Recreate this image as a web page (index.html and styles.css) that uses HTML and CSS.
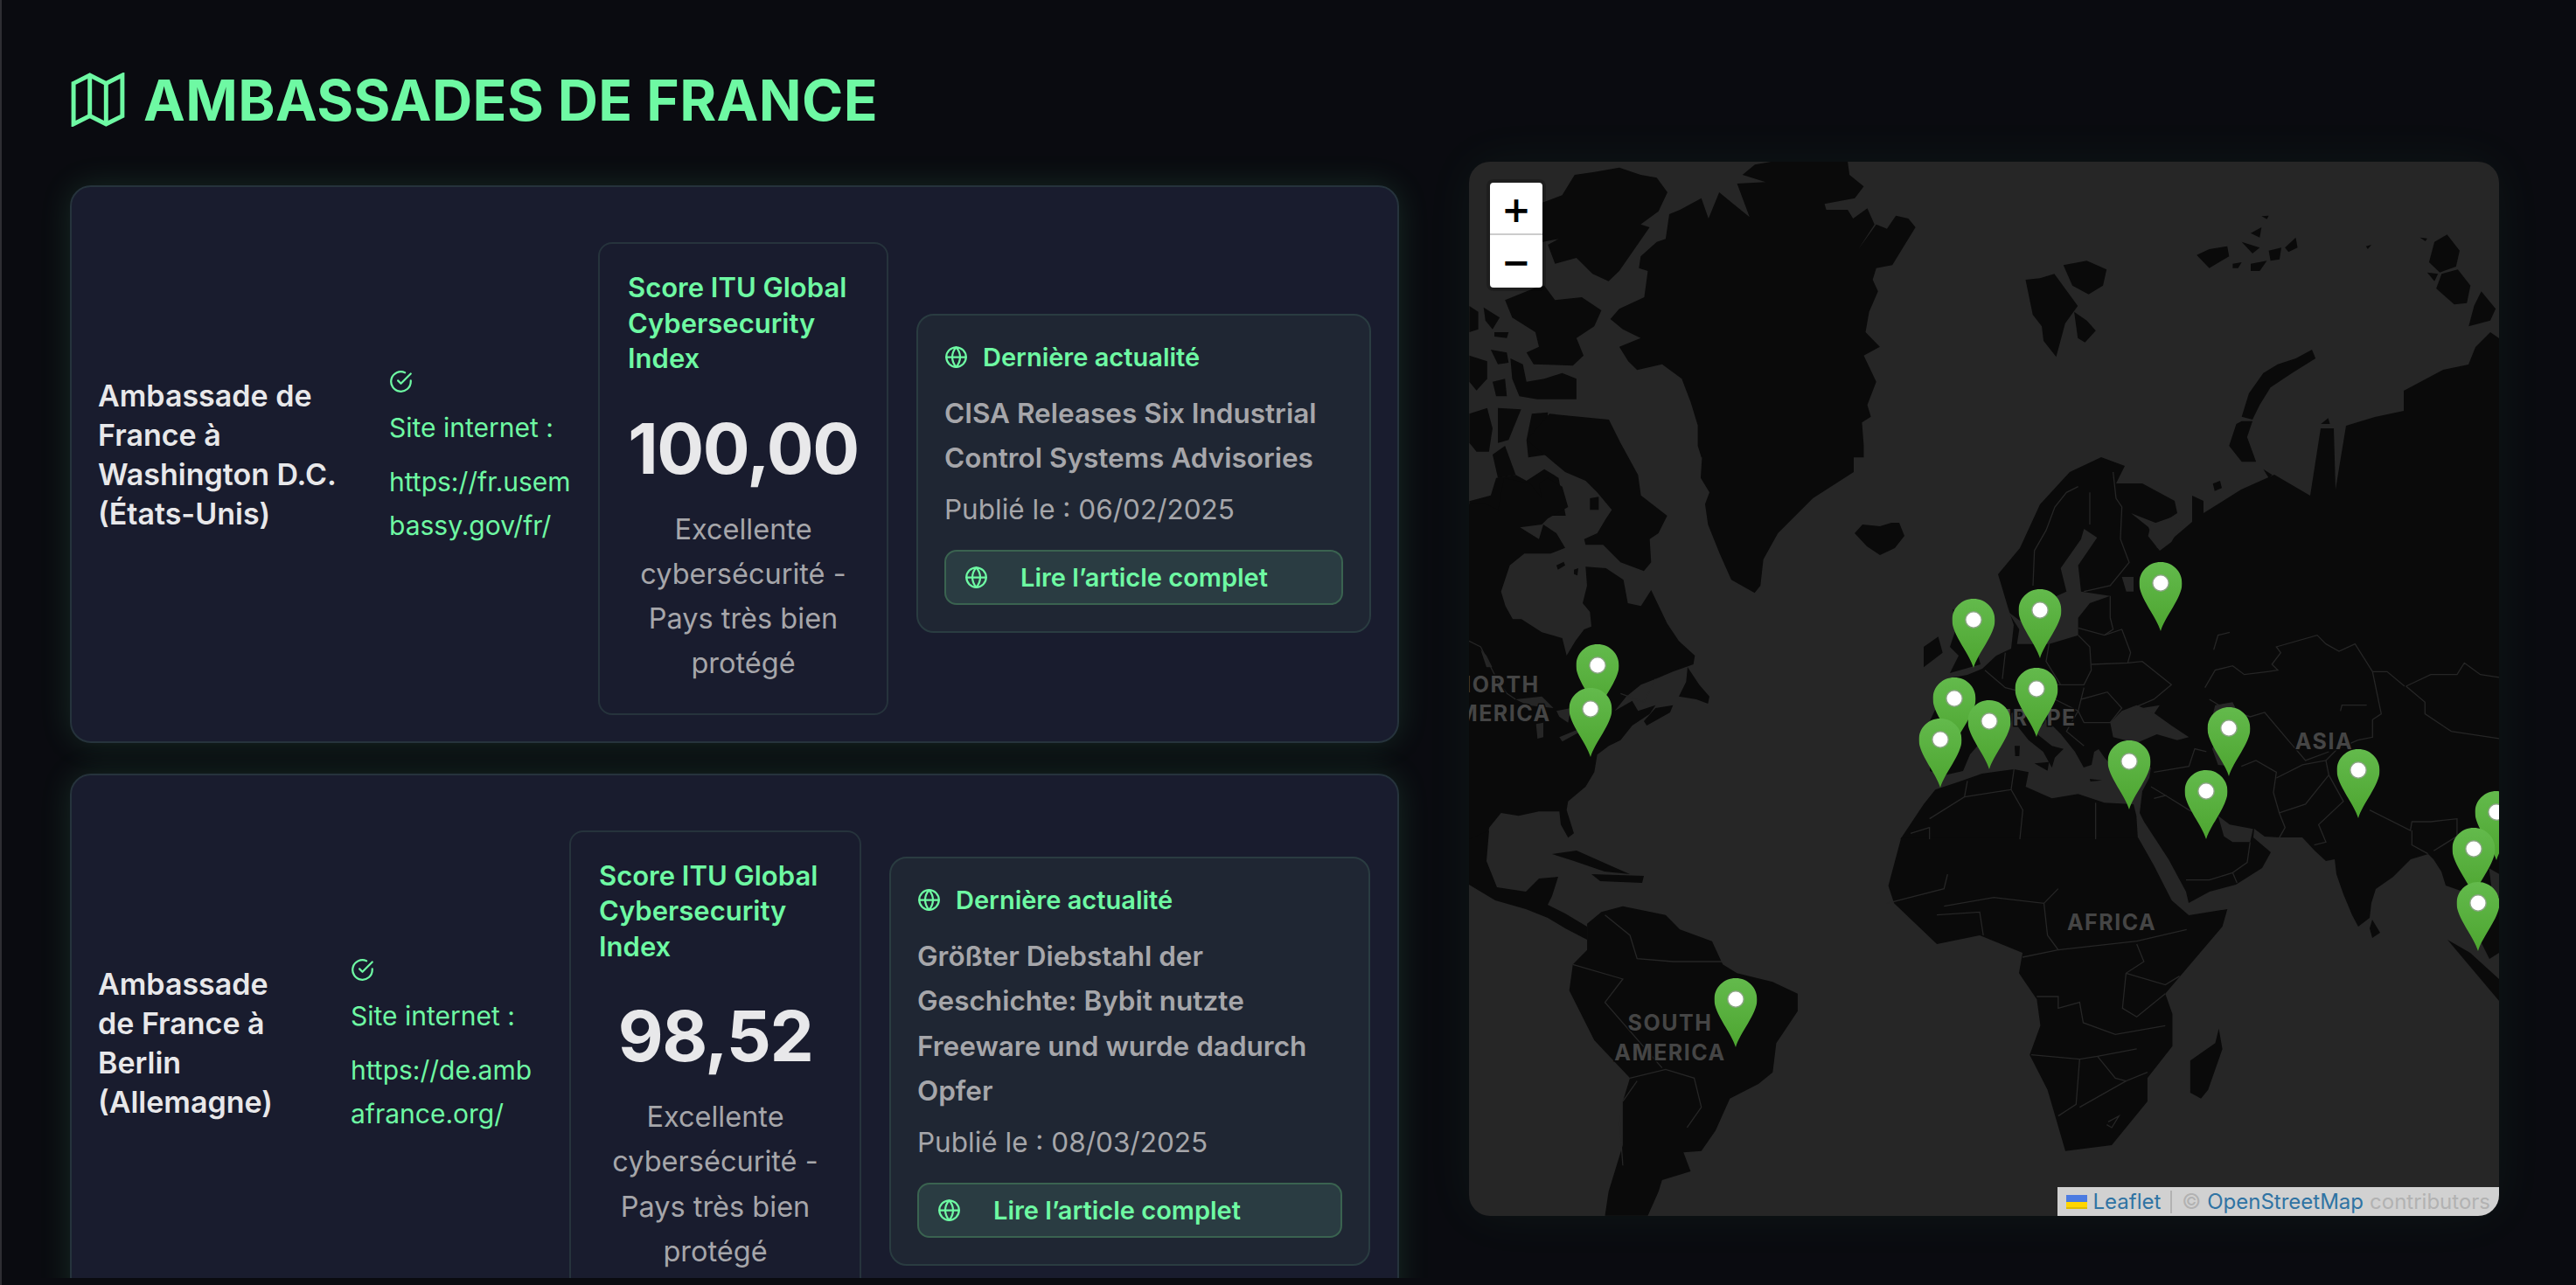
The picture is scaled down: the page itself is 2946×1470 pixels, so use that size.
FILE: index.html
```html
<!DOCTYPE html>
<html lang="fr">
<head>
  <meta charset="UTF-8">
  <title>Ambassades de France</title>
  <link rel="stylesheet" href="styles.css">
</head>
<body>
  <svg class="defs" width="0" height="0">
    <symbol id="globe" viewBox="0 0 24 24"><circle cx="12" cy="12" r="10"/><path d="M2 12h20"/><path d="M12 2a15.3 15.3 0 0 1 4 10 15.3 15.3 0 0 1-4 10 15.3 15.3 0 0 1-4-10 15.3 15.3 0 0 1 4-10z"/></symbol>
    <symbol id="check" viewBox="0 0 24 24"><path d="M22 11.08V12a10 10 0 1 1-5.93-9.14"/><path d="M22 4 12 14.01l-3-3"/></symbol>
  </svg>

  <div class="panel">
    <h1 class="title">
      <svg class="title-icon" viewBox="2 2 20 20"><polygon points="3 6 9 3 15 6 21 3 21 18 15 21 9 18 3 21"/><path d="M9 3v15"/><path d="M15 6v15"/></svg>
      AMBASSADES DE FRANCE
    </h1>

    <article class="card card-dc">
      <h2 class="name">Ambassade de<br>France à<br>Washington D.C.<br>(États-Unis)</h2>
      <div class="site">
        <svg class="ico check"><use href="#check"/></svg>
        <p class="site-label">Site internet :</p>
        <a class="site-link">https://fr.usem<br>bassy.gov/fr/</a>
      </div>
      <div class="score">
        <h3 class="score-title">Score ITU Global<br>Cybersecurity<br>Index</h3>
        <div class="score-value">100,00</div>
        <p class="score-desc">Excellente<br>cybersécurité -<br>Pays très bien<br>protégé</p>
      </div>
      <div class="news">
        <div class="news-head"><svg class="ico"><use href="#globe"/></svg>Dernière actualité</div>
        <p class="news-title">CISA Releases Six Industrial<br>Control Systems Advisories</p>
        <p class="news-date">Publié le : 06/02/2025</p>
        <a class="news-btn"><svg class="ico"><use href="#globe"/></svg>Lire l’article complet</a>
      </div>
    </article>

    <article class="card card-berlin">
      <h2 class="name">Ambassade<br>de France à<br>Berlin<br>(Allemagne)</h2>
      <div class="site">
        <svg class="ico check"><use href="#check"/></svg>
        <p class="site-label">Site internet :</p>
        <a class="site-link">https://de.amb<br>afrance.org/</a>
      </div>
      <div class="score">
        <h3 class="score-title">Score ITU Global<br>Cybersecurity<br>Index</h3>
        <div class="score-value">98,52</div>
        <p class="score-desc">Excellente<br>cybersécurité -<br>Pays très bien<br>protégé</p>
      </div>
      <div class="news">
        <div class="news-head"><svg class="ico"><use href="#globe"/></svg>Dernière actualité</div>
        <p class="news-title">Größter Diebstahl der<br>Geschichte: Bybit nutzte<br>Freeware und wurde dadurch<br>Opfer</p>
        <p class="news-date">Publié le : 08/03/2025</p>
        <a class="news-btn"><svg class="ico"><use href="#globe"/></svg>Lire l’article complet</a>
      </div>
    </article>
  </div>

  <div class="side">
    <div class="map">
      <svg class="map-svg" viewBox="1680 185 1178 1206" width="1178" height="1206">
        <defs>
          <linearGradient id="pinfill" x1="0" y1="0" x2="0" y2="1">
            <stop offset="0" stop-color="#63ba4c"/>
            <stop offset="1" stop-color="#4da530"/>
          </linearGradient>
          <symbol id="pin" width="49" height="79" viewBox="0 0 49 79">
            <path d="M24.5 79C20 63 0 41 0 24.5 0 10.500 11 0 24.500 0S49 10.500 49 24.500C49 41 29 63 24.500 79z" fill="url(#pinfill)"/>
            <circle cx="24.500" cy="24" r="10" fill="#8aa583"/>
            <circle cx="24.500" cy="24" r="8.500" fill="#fff"/>
          </symbol>
        </defs>
        <rect x="1680" y="185" width="1178" height="1206" class="sea"/>

        <!-- arctic canada + greenland -->
        <g class="land" transform="translate(1660 170) scale(.4082 .3333)">
          <polygon points="815,90 850,55 900,44 1110,44 1115,90 1155,130 1130,170 1045,190 1050,210 1110,210 1125,240 1165,205 1185,260 1140,345 1190,260 1220,275 1245,230 1280,240 1300,270 1265,340 1235,400 1190,410 1180,450 1195,490 1170,560 1160,630 1200,680 1155,710 1190,800 1165,880 1175,920 1150,940 1155,1020 1155,1060 700,1060 690,1020 690,950 670,870 645,790 590,740 520,760 495,730 470,680 530,650 480,620 445,585 470,550 540,510 550,420 525,410 530,370 575,320 600,310 610,225 640,210 670,280 640,210 700,170 720,240 750,150 800,200 835,235 800,120 880,115"/>
          <polygon points="255,185 310,160 345,90 400,80 470,65 530,90 575,100 605,150 580,215 530,260 555,270 470,420 440,455 395,430 350,375 290,395 270,330 300,310 255,320"/>
          <polygon points="150,520 230,480 260,470 290,520 365,510 420,555 400,610 350,650 370,710 340,745 230,740 210,700 245,680 235,630 170,580"/>
          <polygon points="50,540 75,560 75,620 50,630"/>
          <polygon points="90,545 135,580 115,620 95,590"/>
          <polygon points="120,630 160,630 155,650 120,645"/>
          <polygon points="110,690 155,700 160,735 130,740"/>
          <polygon points="165,720 200,740 210,800 260,790 310,770 350,790 350,860 240,860 190,850 170,790"/>
          <polygon points="50,710 100,730 100,790 70,830 50,800"/>
          <polygon points="115,800 150,790 155,850 125,850"/>
          <polygon points="50,910 100,890 115,960 105,1040 70,1040 50,1010"/>
          <polygon points="130,890 195,895 160,1000 130,1010"/>
          <polygon points="210,1000 225,910 270,905 265,1000 270,1050 215,1060"/>
          <polygon points="115,1050 150,1020 180,1120 130,1130"/>
          <polygon points="50,1210 110,1190 125,1130 180,1120 210,1140 260,1100 300,1130 320,1260 50,1260"/>
        </g>

        <!-- russian arctic islands -->
        <g class="land" transform="translate(2300 170) scale(.412 .3333)">
          <polygon points="40,450 80,445 120,430 185,540 150,600 125,715 90,660 85,610 60,570"/>
          <polygon points="145,400 210,385 265,415 255,470 215,500 170,470"/>
          <polygon points="175,560 210,590 235,625 205,665 185,650"/>
          <polygon points="515,365 550,345 600,335 605,370 550,410"/>
          <polygon points="640,320 690,340 670,360"/>
          <polygon points="715,350 750,340 745,380 720,385"/>
          <polygon points="760,340 790,305 795,340 770,355"/>
          <polygon points="665,290 695,270 690,305"/>
          <polygon points="695,232 715,230 710,242"/>
          <polygon points="615,395 640,390 630,410 615,410"/>
          <polygon points="665,395 710,385 690,420 665,420"/>
          <polygon points="835,690 845,720 780,770 720,820 690,880 670,930 640,920 660,840 700,770 740,740 790,720"/>
          <polygon points="640,935 670,935 655,990 680,1075 640,1075 605,1020 625,945"/>
          <polygon points="1210,295 1245,350 1235,405 1190,425 1160,390 1175,320"/>
          <polygon points="1155,425 1185,430 1175,455"/>
          <polygon points="1195,430 1240,415 1275,470 1265,530 1230,535 1180,480"/>
          <polygon points="1305,490 1345,550 1330,590 1270,610 1285,540"/>
          <polygon points="860,945 880,925 885,945"/>
          <polygon points="560,1150 580,1140 585,1165 565,1175"/>
          <polygon points="700,1100 725,1120 715,1130"/>
          <polygon points="985,335 1000,330 990,345"/>
          <polygon points="1135,305 1155,308 1150,318"/>
        </g>

        <g class="land" transform="translate(1680 520) scale(.3333)">
          <polygon points="198,-50 276,-140 480,-120 520,-40 580,70 590,140 680,210 650,270 620,290 625,370 600,400 520,370 460,310 400,310 395,290 440,270 470,220 490,190 440,130 400,90 330,60 270,10"/>
          <polygon points="415,150 445,145 445,190 415,190"/>
          <polygon points="0,170 60,170 100,190 120,80 210,100 250,150 240,100 270,80 320,110 340,180 270,220 250,240 175,250 240,290 255,240 300,270 330,320 280,340 250,340 190,340 140,380 110,470 125,520 150,565 180,565 250,610 320,630 335,690 365,640 395,600 420,590 415,540 390,510 405,450 400,385 470,390 530,430 545,510 590,520 625,465 680,580 720,640 775,690 770,720 700,745 640,770 590,790 540,830 500,880 560,845 580,880 640,860 620,890 560,930 520,980 480,1000 440,1030 430,1090 400,1140 340,1190 335,1220 360,1300 340,1315 315,1270 310,1225 240,1225 170,1240 110,1230 70,1280 60,1320 0,1320"/>
          <polygon points="750,730 790,790 825,830 820,855 780,840 720,830 745,780"/>
          <polygon points="640,870 700,860 690,885 610,930 600,915"/>
          <polygon points="300,380 325,368 330,380 305,395"/>
          <polygon points="360,395 375,390 372,415 360,410"/>
          <!-- greenland tail -->
          <polygon points="800,0 1320,0 1320,60 1180,150 1060,270 1010,360 1000,450 980,475 900,430 860,340 820,240 810,170 825,130 795,80"/>
          <!-- lakes -->
          <polygon class="sea" points="160,840 250,830 290,870 200,860"/>
          <polygon class="sea" points="230,925 255,920 255,970 235,975"/>
          <polygon class="sea" points="300,880 350,870 340,920 310,900"/>
          <polygon class="sea" points="310,970 370,945 375,955 320,985"/>
          <polygon class="sea" points="40,670 60,690 80,730 60,730"/>
        </g>

        <g class="land">
          <!-- mexico, central america, caribbean -->
          <polygon points="1680,960 1703,950 1700,985 1712,1015 1745,1020 1760,1005 1782,1003 1775,1025 1770,1035 1790,1045 1815,1060 1815,1075 1790,1062 1770,1050 1745,1040 1710,1030 1680,1012"/>
          <polygon points="1775,977 1803,973 1848,993 1864,1000 1835,997 1800,985"/>
          <polygon points="1820,1000 1880,1002 1878,1010 1830,1008"/>
          <!-- iceland -->
          <polygon points="2121,610 2130,600 2150,602 2163,598 2172,598 2178,613 2167,627 2150,635 2135,625"/>
          <!-- eurasia -->
          <polygon points="2200,840 2213,812 2250,812 2238,790 2228,776 2250,772 2267,765 2283,750 2300,742 2303,715 2297,697 2285,657 2310,627 2333,577 2367,540 2403,523 2430,533 2420,553 2450,553 2487,573 2490,587 2470,600 2437,587 2457,603 2467,627 2480,620 2507,597 2507,567 2520,573 2520,587 2563,560 2601,543 2642,567 2654,490 2669,490 2671,560 2683,487 2716,477 2749,470 2749,447 2794,423 2823,417 2831,397 2848,380 2858,387 2858,1090 2847,1097 2830,1063 2820,1040 2817,1020 2797,1013 2792,997 2783,983 2777,977 2757,983 2737,1003 2717,1017 2712,1033 2710,1050 2697,1060 2690,1047 2680,1023 2672,1000 2670,983 2660,985 2647,973 2633,958 2607,958 2590,957 2578,948 2577,958 2597,975 2587,993 2557,1012 2527,1020 2503,1033 2500,1020 2480,983 2467,963 2452,940 2447,930 2450,905 2458,890 2460,878 2417,878 2407,867 2400,857 2395,860 2392,875 2383,878 2373,860 2357,840 2337,820 2323,807 2313,807 2307,813 2283,823 2267,847 2253,863 2245,882 2223,887 2207,882 2208,853"/>
          <!-- sumatra, sri lanka -->
          <polygon points="2799,1075 2825,1090 2858,1120 2858,1145 2820,1100"/>
          <polygon points="2713,1052 2722,1067 2713,1073 2710,1062"/>
        </g>

        <g class="land" transform="translate(2150 520) scale(.3333)">
          <!-- uk, ireland, italy, islands -->
          <polygon points="250,530 300,560 345,720 240,750 270,690 240,660 260,600"/>
          <polygon points="150,660 200,625 215,680 150,730"/>
          <polygon points="490,860 540,960 590,1000 630,1010 600,1040 590,1075 560,1020 510,980 470,930"/>
          <polygon points="462,1000 480,1000 478,1035 464,1035"/>
          <polygon points="530,1060 580,1055 575,1085"/>
          <polygon points="720,1113 762,1118 722,1122"/>
          <!-- north africa -->
          <polygon points="70,1320 110,1260 150,1200 190,1150 280,1120 350,1095 460,1080 510,1090 500,1140 590,1180 680,1165 770,1195 870,1200 880,1240 885,1320"/>
          <!-- baltic, white sea, black sea -->
          <polygon class="sea" points="700,255 745,285 680,380 690,470 790,485 720,510 680,560 680,620 580,650 470,650 478,600 440,540 480,570 530,520 640,470 620,390 690,290"/>
          <polygon class="sea" points="930,240 1000,215 1040,230 1000,300 960,330 920,280"/>
          <polygon class="sea" points="790,920 830,880 880,860 930,880 1000,930 1060,970 1020,980 950,960 880,990 800,970"/>
          <polygon class="sea" points="900,870 960,860 940,890"/>
          <polygon class="sea" points="830,420 870,420 870,470 845,470"/>
        </g>

        <g transform="translate(2430 700) scale(.3333)">
          <polygon class="sea" points="310,320 370,310 390,350 370,530 320,525 300,470 330,400 300,360"/>
          <polygon class="sea" points="320,700 360,730 440,745 430,790 370,790 340,770"/>
          <polygon class="sea" points="1250,880 1285,900 1285,980 1260,960"/>
        </g>

        <g class="land" transform="translate(1660 1000) scale(.8163 .3333)">
          <!-- south america -->
          <polygon points="190,170 210,130 240,110 300,140 320,190 365,230 380,310 400,340 450,370 485,410 485,470 455,580 450,680 430,720 390,770 370,880 350,950 325,955 335,1020 295,1050 290,1090 275,1172 215,1172 220,1090 240,930 240,780 250,700 200,570 165,400 170,310 190,260"/>
          <!-- africa below the mediterranean -->
          <polygon points="630,-125 962,-125 984,-30 1009,90 1033,141 1087,120 1080,180 1000,410 1010,480 1010,590 975,700 975,780 925,930 860,950 835,740 810,620 825,520 820,430 795,340 800,270 770,240 740,210 680,240 620,100 612,40"/>
          <polygon points="1075,530 1080,600 1060,740 1050,770 1035,750 1035,640 1070,580"/>
        </g>

        <g class="border" transform="translate(2150 520) scale(.3333)">
          <polyline points="680,110 640,130 600,180 570,260 530,330 525,450"/>
          <polyline points="720,130 720,240"/>
          <polyline points="800,60 810,150 830,180 825,290 855,370 790,450 700,470"/>
          <polyline points="680,595 770,620 800,600 790,560 790,485"/>
          <polyline points="680,620 720,660 725,740 700,790 620,790 570,710 580,650"/>
          <polyline points="770,620 830,600 860,680 850,715 725,720"/>
          <polyline points="850,715 900,710 1000,790 940,840 870,870"/>
          <polyline points="700,800 690,840 780,815 830,870 790,920 700,920 680,880 690,840"/>
          <polyline points="360,740 430,800 470,810 570,790 620,790"/>
          <polyline points="430,680 420,770"/>
          <polyline points="170,1250 290,1175 300,1120"/>
          <polyline points="290,1175 450,1150 460,1080"/>
          <polyline points="450,1150 490,1220 480,1320"/>
          <polyline points="740,1195 740,1320"/>
          <polyline points="105,1300 170,1280 170,1320"/>
          <polyline points="600,840 680,880 640,950 700,1000"/>
        </g>
        <g class="border" transform="translate(2430 700) scale(.3333)">
          <polyline points="275,260 310,200 370,185 410,215 490,205 525,200 505,180 535,140 520,120 660,80 690,110 735,135 790,110 850,205 900,205 960,255"/>
          <polyline points="290,300 340,330 430,360 480,345 560,440 620,510 700,480"/>
          <polyline points="965,255 1050,215 1140,215 1165,175 1220,215 1285,225"/>
          <polyline points="965,255 1030,310 1030,350 1120,410 1285,435"/>
          <polyline points="850,205 880,350 850,370 850,430 800,440 730,470 690,510"/>
          <polyline points="400,530 450,510 520,550 510,620 530,690 550,740 530,775"/>
          <polyline points="520,570 610,525 690,510 700,560 620,660 530,690"/>
          <polyline points="700,560 750,650 665,730 690,790 650,800"/>
          <polyline points="840,680 980,750 985,720 1050,720 1140,710 1140,770 1060,820"/>
          <polyline points="985,750 985,800 1040,830"/>
          <polyline points="140,630 220,680 310,720"/>
          <polyline points="210,920 290,920 370,895 420,860 430,790"/>
          <polyline points="370,895 385,930"/>
          <polyline points="100,550 220,530 240,470 280,480"/>
          <polyline points="100,640 140,630 90,600"/>
          <polyline points="305,130 320,80 360,70"/>
          <polyline points="740,340 745,320 830,320"/>
        </g>
        <g class="border" transform="translate(1660 1000) scale(.8163 .3333)">
          <polyline points="610,100 690,50 695,0"/>
          <polyline points="690,110 760,80 830,100 850,50"/>
          <polyline points="680,140 740,130 745,210"/>
          <polyline points="830,100 835,210 850,260 800,285"/>
          <polyline points="850,260 960,230 1030,190"/>
          <polyline points="820,420 850,420 850,460 880,440 885,510 930,550 1000,520"/>
          <polyline points="812,620 880,635 905,625 960,600"/>
          <polyline points="880,635 875,790 850,830"/>
          <polyline points="905,625 930,700 945,710 975,680"/>
          <polyline points="945,710 880,800"/>
          <polyline points="960,240 970,300 945,340 940,460 960,490 1000,410"/>
          <polyline points="945,340 1000,380 1020,350"/>
          <polyline points="215,140 250,210 260,290 310,300 380,300"/>
          <polyline points="170,310 240,360 215,440 295,665"/>
          <polyline points="250,700 300,670 340,700 350,800 330,870"/>
          <polyline points="240,780 260,710"/>
          <polyline points="240,1000 235,830"/>
          <polyline points="920,850 935,830 925,870 918,860"/>
        </g>
        <g class="border" transform="translate(1680 520) scale(.3333)">
          <polyline points="0,640 40,660 100,780 130,820 160,840"/>
          <polyline points="520,820 600,850 640,770"/>
        </g>

        <text class="geo" x="1712" y="792">NORTH</text>
        <text class="geo" x="1710" y="825">AMERICA</text>
        <text class="geo" x="2320" y="830">EUROPE</text>
        <text class="geo" x="2658" y="857">ASIA</text>
        <text class="geo" x="2415" y="1064">AFRICA</text>
        <text class="geo" x="1910" y="1179">SOUTH</text>
        <text class="geo" x="1910" y="1213">AMERICA</text>

        <use href="#pin" x="2446.500" y="643"/>
        <use href="#pin" x="2308.500" y="674"/>
        <use href="#pin" x="2232.500" y="685"/>
        <use href="#pin" x="1802.500" y="737"/>
        <use href="#pin" x="2304.500" y="764"/>
        <use href="#pin" x="2210.500" y="775"/>
        <use href="#pin" x="1794.500" y="787"/>
        <use href="#pin" x="2250.500" y="801"/>
        <use href="#pin" x="2524.500" y="809"/>
        <use href="#pin" x="2194.500" y="822"/>
        <use href="#pin" x="2410.500" y="847"/>
        <use href="#pin" x="2672.500" y="857"/>
        <use href="#pin" x="2498.500" y="881"/>
        <use href="#pin" x="2830.500" y="905"/>
        <use href="#pin" x="2804.500" y="947"/>
        <use href="#pin" x="2809.500" y="1009"/>
        <use href="#pin" x="1960.500" y="1119"/>
      </svg>

      <div class="zoom">
        <a class="zoom-btn">+</a>
        <a class="zoom-btn">−</a>
      </div>

      <div class="attrib">
        <svg class="flag" viewBox="0 0 12 8" width="24" height="16"><path fill="#4C7BE1" d="M0 0h12v4H0z"/><path fill="#FFD500" d="M0 4h12v3H0z"/><path fill="#E0BC00" d="M0 7h12v1H0z"/></svg>
        <a class="attrib-link">Leaflet</a>
        <span class="attrib-sep"></span>
        <span>©</span> <a class="attrib-link">OpenStreetMap</a> <span>contributors</span>
      </div>
    </div>
  </div>
</body>
</html>
```

FILE: styles.css
```css
html, body { margin: 0; height: 1470px; overflow: hidden; }
body {
  display: flex;
  background: #0a0b10;
  font-family: "Inter", "Liberation Sans", sans-serif;
  color: #e8e8ea;
  border-left: 2px solid #2e2e33;
  box-sizing: border-box;
}
.defs { position: absolute; }

.panel {
  width: 1638px;
  height: 1462px;
  overflow: hidden;
  flex: none;
  box-sizing: border-box;
  padding: 0 40px 0 78px;
}
.title {
  display: flex;
  align-items: center;
  gap: 20px;
  height: 212px;
  padding-top: 16px;
  box-sizing: border-box;
  margin: 0;
  font-size: 64px;
  font-weight: 700;
  letter-spacing: 0.4px;
  color: #6ef9a3;
  white-space: nowrap;
}
.title-icon {
  width: 64px;
  height: 62px;
  fill: none;
  stroke: #6ef9a3;
  stroke-width: 1.6;
  stroke-linejoin: miter;
}

.card {
  display: grid;
  align-items: center;
  column-gap: 32px;
  margin-bottom: 35px;
  padding: 31px 30px 30px;
  background: #191c2e;
  border: 2px solid #26333c;
  border-radius: 24px;
  box-shadow: 0 0 36px rgba(110, 249, 163, 0.13);
  white-space: nowrap;
}
.card-dc { grid-template-columns: 301px 207px 332px 520px; }
.card-berlin { grid-template-columns: 257px 218px 334px 550px; }

.name {
  margin: 0 0 22px;
  font-size: 34px;
  font-weight: 600;
  line-height: 45px;
}
.site {
  margin-bottom: 14px;
  color: #6ef9a3;
  font-size: 30px;
  line-height: 50px;
}
.site-label { margin: 21px 0 19px; line-height: 36px; }
.site-link { display: block; }

.ico {
  width: 27px;
  height: 27px;
  flex: none;
  fill: none;
  stroke: #6ef9a3;
  stroke-width: 2;
  stroke-linecap: round;
  stroke-linejoin: round;
}
.check { display: block; }

.score {
  margin-top: 32px;
  padding: 30px 32px 31px;
  background: #191c2e;
  border: 2px solid #26333c;
  border-radius: 16px;
  text-align: center;
}
.score-title {
  margin: 0;
  font-size: 31px;
  font-weight: 600;
  line-height: 40.500px;
  color: #6ef9a3;
  text-align: left;
}
.score-value {
  margin: 27px 0 12px;
  font-size: 80px;
  font-weight: 700;
  line-height: 110px;
  letter-spacing: -1.500px;
  color: #e8e8ea;
}
.score-desc {
  margin: 0;
  font-size: 32.500px;
  line-height: 51.300px;
  color: #a6a6aa;
}

.news {
  margin-top: 20px;
  padding: 30px 30px 30px;
  background: #1f2633;
  border: 2px solid #2a3c41;
  border-radius: 20px;
}
.news-head {
  display: flex;
  align-items: center;
  gap: 17px;
  font-size: 29px;
  font-weight: 600;
  line-height: 36px;
  color: #6ef9a3;
}
.news-title {
  margin: 20px 0 0;
  font-size: 31.500px;
  font-weight: 600;
  line-height: 51.300px;
  color: #a6a6aa;
}
.news-date {
  margin: 9px 0 0;
  font-size: 31.500px;
  line-height: 50px;
  color: #a6a6aa;
}
.news-btn {
  display: flex;
  align-items: center;
  gap: 37px;
  height: 63px;
  margin-top: 21px;
  padding-left: 21px;
  box-sizing: border-box;
  background: #2a3c42;
  border: 2px solid #3a6350;
  border-radius: 14px;
  font-size: 29px;
  font-weight: 600;
  color: #6ef9a3;
}

.side {
  flex: 1;
  padding: 185px 88px 0 40px;
}
.map {
  position: relative;
  width: 1178px;
  height: 1206px;
  overflow: hidden;
  border-radius: 24px;
  box-shadow: 0 0 60px rgba(110, 249, 163, 0.05);
}
.map-svg { display: block; }
.sea { fill: #262626; }
.land { fill: #0a0a0a; }
.border {
  fill: none;
  stroke: #262626;
}
.border polyline { vector-effect: non-scaling-stroke; stroke-width: 1.3; }
.geo {
  font-family: "Inter", sans-serif;
  font-size: 25px;
  font-weight: 700;
  letter-spacing: 1.500px;
  text-anchor: middle;
  fill: #454545;
  stroke: #0a0a0a;
  stroke-width: 3px;
  paint-order: stroke;
}

.zoom {
  position: absolute;
  left: 24px;
  top: 24px;
  width: 60px;
  border-radius: 4px;
  background: #fff;
  box-shadow: 0 0 0 4px rgba(0, 0, 0, 0.2);
}
.zoom-btn {
  display: block;
  height: 60px;
  box-sizing: border-box;
  font-family: "DejaVu Sans", sans-serif;
  font-size: 40px;
  font-weight: 700;
  line-height: 63px;
  text-align: center;
  color: #000;
}
.zoom-btn:first-child { border-bottom: 2px solid #ccc; }

.attrib {
  position: absolute;
  right: 0;
  bottom: 0;
  display: flex;
  align-items: center;
  gap: 7px;
  height: 33px;
  padding: 0 10px;
  background: #d1d1d1;
  font-size: 24px;
  color: #b2b2b2;
  white-space: nowrap;
}
.attrib-link { color: #2f73a3; }
.attrib-sep {
  width: 2px;
  height: 26px;
  margin: 0 4px;
  background: #b2b2b2;
}
```
